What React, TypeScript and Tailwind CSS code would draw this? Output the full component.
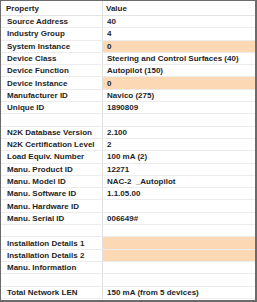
import React from 'react';

interface Row {
  label: string;
  value: string;
  highlight?: boolean;
}

const rows: Row[] = [
  { label: 'Source Address', value: '40' },
  { label: 'Industry Group', value: '4' },
  { label: 'System Instance', value: '0', highlight: true },
  { label: 'Device Class', value: 'Steering and Control Surfaces (40)' },
  { label: 'Device Function', value: 'Autopilot (150)' },
  { label: 'Device Instance', value: '0', highlight: true },
  { label: 'Manufacturer ID', value: 'Navico (275)' },
  { label: 'Unique ID', value: '1890809' },
  { label: '', value: '' },
  { label: 'N2K Database Version', value: '2.100' },
  { label: 'N2K Certification Level', value: '2' },
  { label: 'Load Equiv. Number', value: '100 mA (2)' },
  { label: 'Manu. Product ID', value: '12271' },
  { label: 'Manu. Model ID', value: 'NAC-2  _Autopilot' },
  { label: 'Manu. Software ID', value: '1.1.05.00' },
  { label: 'Manu. Hardware ID', value: '' },
  { label: 'Manu. Serial ID', value: '006649#' },
  { label: '', value: '' },
  { label: 'Installation Details 1', value: '', highlight: true },
  { label: 'Installation Details 2', value: '', highlight: true },
  { label: 'Manu. Information', value: '' },
  { label: '', value: '' },
  { label: 'Total Network LEN', value: '150 mA (from 5 devices)' },
];

export default function App() {
  return (
    <div className="w-[257px] h-[302px] bg-white font-['Liberation_Sans',Arial,sans-serif] text-[8px] font-bold text-[#1e1e1e]">
      <div className="flex h-full flex-col border-t border-l border-r-2 border-b-2 border-[#6b6b6b]">
        {/* Header */}
        <div className="flex h-[15px] border-b border-[#e4e4e4]">
          <div className="flex w-[102px] items-center border-r border-[#e0e0e0] pl-[5px] pt-[1px]">Property</div>
          <div className="flex flex-1 items-center pl-[3px] pt-[1px]">Value</div>
        </div>

        {rows.map((row, i) => (
          <div key={i} className="flex h-[12.3px] border-b border-[#ececec]">
            <div className="flex w-[102px] items-center border-r border-[#e0e0e0] pl-[6px] pt-[1px] whitespace-pre">
              {row.label}
            </div>
            <div
              className={`flex flex-1 items-center pl-[4px] pt-[1px] whitespace-pre ${
                row.highlight ? 'bg-[#fcd8b4]' : ''
              }`}
            >
              {row.value}
            </div>
          </div>
        ))}
      </div>
    </div>
  );
}
